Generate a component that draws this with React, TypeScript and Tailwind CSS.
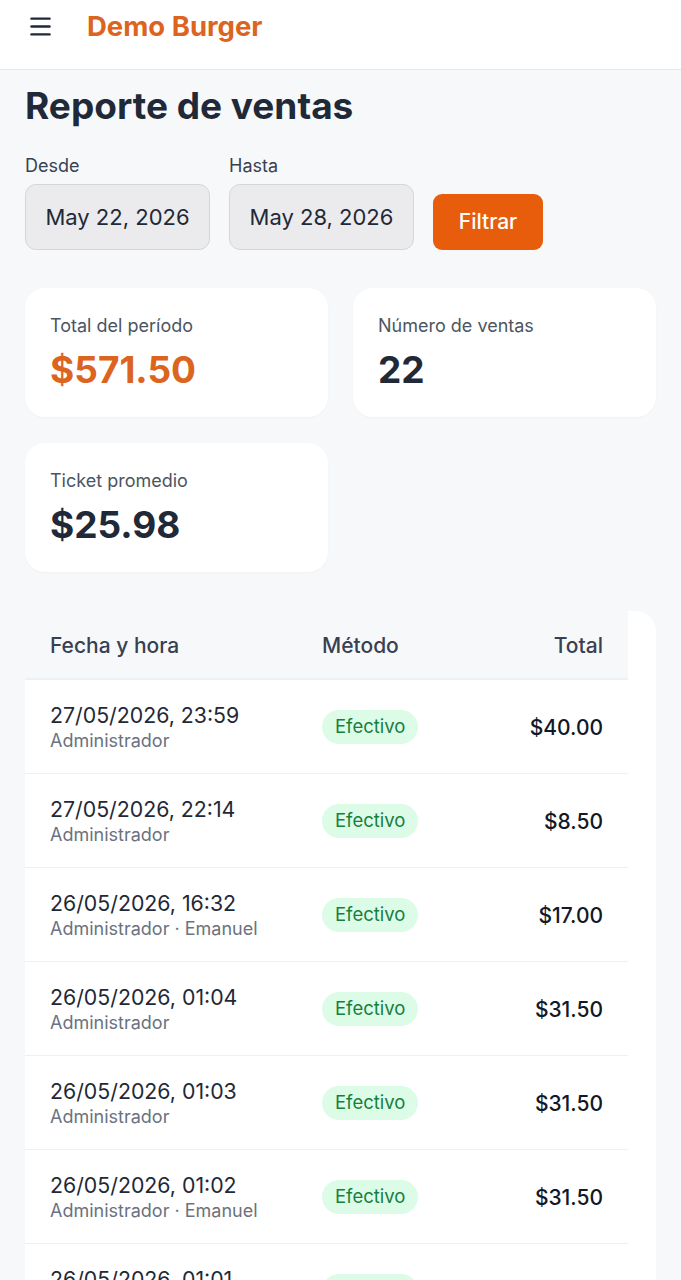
import { Menu } from 'lucide-react';

type Sale = { date: string; user: string; method: string; total: string };

const sales: Sale[] = [
  { date: '27/05/2026, 23:59', user: 'Administrador', method: 'Efectivo', total: '$40.00' },
  { date: '27/05/2026, 22:14', user: 'Administrador', method: 'Efectivo', total: '$8.50' },
  { date: '26/05/2026, 16:32', user: 'Administrador · Emanuel', method: 'Efectivo', total: '$17.00' },
  { date: '26/05/2026, 01:04', user: 'Administrador', method: 'Efectivo', total: '$31.50' },
  { date: '26/05/2026, 01:03', user: 'Administrador', method: 'Efectivo', total: '$31.50' },
  { date: '26/05/2026, 01:02', user: 'Administrador · Emanuel', method: 'Efectivo', total: '$31.50' },
  { date: '26/05/2026, 01:01', user: 'Administrador', method: 'Efectivo', total: '$31.50' },
];

function StatCard({ label, value, accent }: { label: string; value: string; accent?: boolean }) {
  return (
    <div className="bg-white rounded-[20px] h-[129px] px-[25px] pt-[26px] shadow-[0_1px_2px_rgba(0,0,0,0.03)]">
      <p className="text-[18px] leading-[24px] text-[#4b5563]">{label}</p>
      <p className={`mt-[10px] text-[37px] leading-[44px] font-bold ${accent ? 'text-[#dc6420]' : 'text-[#1f2937]'}`}>
        {value}
      </p>
    </div>
  );
}

export default function App() {
  return (
    <div className="min-h-screen bg-[#f7f8fa] font-['Inter',sans-serif] overflow-hidden">
      <header className="h-[70px] bg-white border-b border-[#e5e7eb] flex items-center px-[27px] pb-[16px]">
        <Menu size={27} strokeWidth={2.2} className="text-[#1f2937]" />
        <h1 className="ml-[33px] text-[27.5px] font-bold text-[#dc6420] leading-none">Demo Burger</h1>
      </header>

      <main className="px-[25px] pt-[14px]">
        <h2 className="text-[37px] leading-[44px] font-bold text-[#1f2937]">Reporte de ventas</h2>

        <div className="mt-[26px] flex items-end gap-[19px]">
          <div>
            <label className="block text-[18px] leading-[24px] text-[#374151]">Desde</label>
            <div className="mt-[6px] w-[185px] h-[66px] rounded-[11px] bg-[#ebebed] border border-[#d4d6da] flex items-center justify-center text-[22px] text-[#1f2937]">
              May 22, 2026
            </div>
          </div>
          <div>
            <label className="block text-[18px] leading-[24px] text-[#374151]">Hasta</label>
            <div className="mt-[6px] w-[185px] h-[66px] rounded-[11px] bg-[#ebebed] border border-[#d4d6da] flex items-center justify-center text-[22px] text-[#1f2937]">
              May 28, 2026
            </div>
          </div>
          <button className="w-[110px] h-[56px] rounded-[9px] bg-[#e85d0c] text-white text-[21px] font-medium">
            Filtrar
          </button>
        </div>

        <div className="mt-[38px] grid grid-cols-2 gap-x-[25px] gap-y-[26px]">
          <StatCard label="Total del período" value="$571.50" accent />
          <StatCard label="Número de ventas" value="22" />
          <StatCard label="Ticket promedio" value="$25.98" />
        </div>

        <div className="mt-[39px] bg-white rounded-tr-[20px] rounded-tl-[20px] overflow-hidden">
          <div className="w-[603px]">
            <div className="h-[69px] bg-[#f7f8fa] border-b-2 border-[#eef0f3] flex items-center px-[25px] pt-[3px] text-[21px] text-[#374151] font-medium">
              <div className="w-[272px]">Fecha y hora</div>
              <div className="flex-1">Método</div>
              <div className="text-right">Total</div>
            </div>
            {sales.map((s, i) => (
              <div key={i} className="h-[94px] border-b border-[#eef0f3] flex items-center px-[25px]">
                <div className="w-[272px]">
                  <p className="text-[21.3px] leading-[27px] text-[#1f2937]">{s.date}</p>
                  <p className="text-[18px] leading-[23px] text-[#6b7280]">{s.user}</p>
                </div>
                <div className="flex-1">
                  <span className="inline-flex items-center h-[34px] px-[13px] rounded-full bg-[#dcfce7] text-[#15803d] text-[18.5px]">
                    {s.method}
                  </span>
                </div>
                <div className="text-right text-[21px] font-medium text-[#111827] pt-[3px]">{s.total}</div>
              </div>
            ))}
          </div>
        </div>
      </main>
    </div>
  );
}
